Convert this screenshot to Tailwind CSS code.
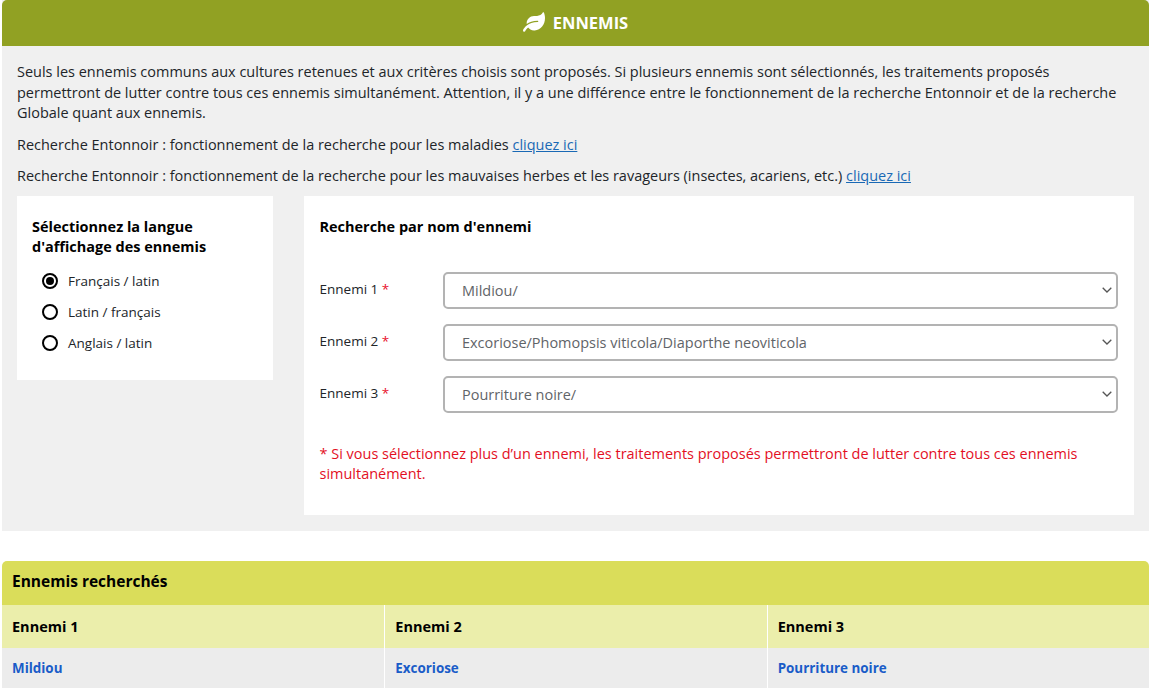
<!DOCTYPE html>
<html lang="fr">
<head>
    <meta charset="UTF-8">
    <title>Ennemis</title>
    <script src="https://cdn.jsdelivr.net/npm/@tailwindcss/browser@4"></script>
</head>
<body class="bg-white h-[692px] overflow-hidden font-['Open_Sans',sans-serif] text-[14.47px] text-[#212529]">
    <div class="pl-[2px] pr-[3px]">
        <!-- bloc ennemis -->
        <div class="bg-[#f0f0f0] h-[531px]">
            <div class="bg-[#91a123] h-[46px] rounded-t-[5px] flex items-center justify-center gap-[8px] text-white font-bold text-[16.5px]">
                <svg class="w-[22px] h-[20px] mb-[3px]" viewBox="0 0 576 512" fill="#fff">
                    <path d="M546.2 9.7c-5.6-12.5-21.6-13-28.3-1.2C486.9 62.4 431.4 96 368 96h-80C182 96 96 182 96 288c0 7 .8 13.7 1.5 20.5C161.3 262.8 253.4 224 384 224c8.8 0 16 7.2 16 16s-7.2 16-16 16C132.6 256 26 410.1 2.4 468c-6.6 16.3 1.2 34.9 17.5 41.6 16.4 6.8 35-1.1 41.8-17.3 1.5-3.6 20.9-47.9 71.9-90.6 32.4 43.9 94 85.8 174.9 77.2C465.5 467.5 576 326.7 576 154.3c0-50.2-10.8-102.2-29.8-144.6z"/>
                </svg>
                <span>ENNEMIS</span>
            </div>
            <div class="px-[15px] pt-[16px]">
                <p class="leading-[20.5px] pr-[8px]">Seuls les ennemis communs aux cultures retenues et aux critères choisis sont proposés. Si plusieurs ennemis sont sélectionnés, les traitements proposés permettront de lutter contre tous ces ennemis simultanément. Attention, il y a une différence entre le fonctionnement de la recherche Entonnoir et de la recherche Globale quant aux ennemis.</p>
                <p class="leading-[20.5px] mt-[11px]">Recherche Entonnoir : fonctionnement de la recherche pour les maladies <a href="#" class="text-[#1a69b5] underline">cliquez ici</a></p>
                <p class="leading-[20.5px] mt-[10.5px]">Recherche Entonnoir : fonctionnement de la recherche pour les mauvaises herbes et les ravageurs (insectes, acariens, etc.) <a href="#" class="text-[#1a69b5] underline">cliquez ici</a></p>
                <div class="flex items-start mt-[9.5px]">
                    <!-- langue -->
                    <div class="w-[256px] h-[184px] bg-white px-[15px] pt-[21px] shrink-0">
                        <p class="font-bold text-black leading-[20px]">Sélectionnez la langue<br>d'affichage des ennemis</p>
                        <div class="mt-[14px] pl-[10px] flex flex-col gap-[10.5px] text-[13.5px]">
                            <label class="flex items-center gap-[10px] h-[20.5px]">
                                <span class="w-[16px] h-[16px] rounded-full border-2 border-black flex items-center justify-center"><span class="w-[8px] h-[8px] rounded-full bg-black"></span></span>
                                Français / latin
                            </label>
                            <label class="flex items-center gap-[10px] h-[20.5px]">
                                <span class="w-[16px] h-[16px] rounded-full border-2 border-black"></span>
                                Latin / français
                            </label>
                            <label class="flex items-center gap-[10px] h-[20.5px]">
                                <span class="w-[16px] h-[16px] rounded-full border-2 border-black"></span>
                                Anglais / latin
                            </label>
                        </div>
                    </div>
                    <!-- recherche -->
                    <div class="ml-[31px] flex-1 h-[319.5px] bg-white pl-[15.5px] pr-[16px] pt-[21px]">
                        <p class="font-bold text-black leading-[20px]">Recherche par nom d'ennemi</p>
                        <div class="mt-[35px] flex flex-col gap-[15px]">
                            <div class="flex items-center">
                                <span class="w-[123.5px] shrink-0 mb-[1px] text-[13.5px]">Ennemi 1 <span class="text-[#e8112d]">*</span></span>
                                <div class="flex-1 h-[37px] border-2 border-[#b3b3b3] rounded-[5px] flex items-center justify-between pl-[17px] pr-[4px] text-[#5f6468]">
                                    <span class="mt-[1px]">Mildiou/</span>
                                    <svg class="w-[10px] h-[6px]" viewBox="0 0 10 6" fill="none" stroke="#555" stroke-width="1.3"><path d="M.7.7 5 5l4.300-4.300"/></svg>
                                </div>
                            </div>
                            <div class="flex items-center">
                                <span class="w-[123.5px] shrink-0 mb-[1px] text-[13.5px]">Ennemi 2 <span class="text-[#e8112d]">*</span></span>
                                <div class="flex-1 h-[37px] border-2 border-[#b3b3b3] rounded-[5px] flex items-center justify-between pl-[17px] pr-[4px] text-[#5f6468]">
                                    <span class="mt-[1px]">Excoriose/Phomopsis viticola/Diaporthe neoviticola</span>
                                    <svg class="w-[10px] h-[6px]" viewBox="0 0 10 6" fill="none" stroke="#555" stroke-width="1.3"><path d="M.7.7 5 5l4.300-4.300"/></svg>
                                </div>
                            </div>
                            <div class="flex items-center">
                                <span class="w-[123.5px] shrink-0 mb-[1px] text-[13.5px]">Ennemi 3 <span class="text-[#e8112d]">*</span></span>
                                <div class="flex-1 h-[37px] border-2 border-[#b3b3b3] rounded-[5px] flex items-center justify-between pl-[17px] pr-[4px] text-[#5f6468]">
                                    <span class="mt-[1px]">Pourriture noire/</span>
                                    <svg class="w-[10px] h-[6px]" viewBox="0 0 10 6" fill="none" stroke="#555" stroke-width="1.3"><path d="M.7.7 5 5l4.300-4.300"/></svg>
                                </div>
                            </div>
                        </div>
                        <p class="mt-[31px] leading-[20.5px] text-[#e3101f]">* Si vous sélectionnez plus d’un ennemi, les traitements proposés permettront de lutter contre tous ces ennemis simultanément.</p>
                    </div>
                </div>
            </div>
        </div>
        <!-- ennemis recherchés -->
        <div class="mt-[30px] font-bold text-black">
            <div class="bg-[#dadd5a] h-[44px] rounded-t-[5px] flex items-center px-[10px] text-[15.5px] pb-[3px]">Ennemis recherchés</div>
            <div class="grid grid-cols-3 text-[14.5px]">
                <div class="bg-[#ebeeab] h-[43px] flex items-center px-[10px]">Ennemi 1</div>
                <div class="bg-[#ebeeab] h-[43px] flex items-center px-[10px] border-l border-white">Ennemi 2</div>
                <div class="bg-[#ebeeab] h-[43px] flex items-center px-[10px] border-l border-white">Ennemi 3</div>
                <div class="bg-[#ececec] h-[40px] flex items-center px-[10px] text-[13.4px] text-[#1a5cc8]">Mildiou</div>
                <div class="bg-[#ececec] h-[40px] flex items-center px-[10px] text-[13.4px] text-[#1a5cc8] border-l border-white">Excoriose</div>
                <div class="bg-[#ececec] h-[40px] flex items-center px-[10px] text-[13.4px] text-[#1a5cc8] border-l border-white">Pourriture noire</div>
            </div>
        </div>
    </div>
</body>
</html>
